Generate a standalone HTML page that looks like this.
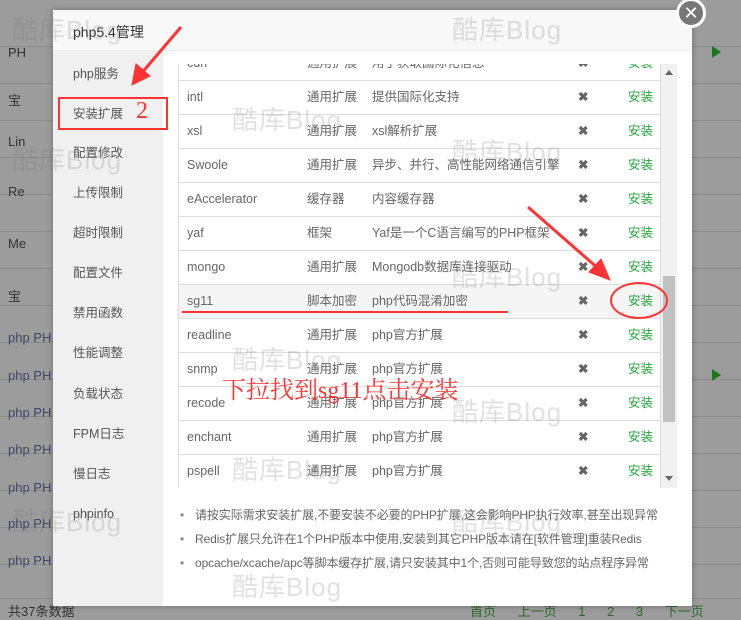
<!DOCTYPE html>
<html><head><meta charset="utf-8"><style>
*{margin:0;padding:0;box-sizing:border-box}
body{width:741px;height:618px;overflow:hidden;background:#9c9c9c;font-family:"Liberation Sans","Noto Sans CJK SC",sans-serif;position:relative;font-size:12px;color:#555}
.bgl{position:absolute;left:0;height:1px;width:741px;background:#8a8a8a}
.bgt{position:absolute;left:8px;font-size:13px;color:#333}
.modal{position:absolute;left:53px;top:10px;width:639px;height:596px;background:#fff;box-shadow:0 0 6px rgba(0,0,0,.3)}
.hd{position:absolute;left:0;top:0;width:639px;height:41px;background:#f8f8f8;border-bottom:1px solid #eee;font-size:14px;color:#333;padding:12px 0 0 20px}
.side{position:absolute;left:0;top:41px;width:110px;height:555px;background:#f0f0f0}
.side div{position:absolute;left:20px;font-size:12.5px;color:#555;line-height:18px}
.tbl{position:absolute;left:125px;top:54px;width:499px;height:424px;overflow:hidden}
.row{position:absolute;left:0;width:483px;height:34px;border:1px solid #ddd;border-top:none;font-size:12.5px;color:#666}
.row span{position:absolute;top:0;line-height:33px;height:33px}
.c1{left:8px}.c2{left:128px}.c3{left:193px}.c4{left:399px;color:#666;font-weight:bold}.c5{left:449px;color:#20a53a}
.sb{position:absolute;left:483px;top:0;width:16px;height:424px;background:#f1f1f1}
.note{position:absolute;left:142px;font-size:12px;color:#666;line-height:18px;letter-spacing:-0.1px}
.note:before{content:"•";position:absolute;left:-15px;color:#888}
.red{color:#f33;font-family:"Liberation Serif","Noto Serif CJK SC",serif}
.wm{position:absolute;font-size:26px;color:rgba(120,120,120,.22);letter-spacing:1px}
</style></head><body>
<div class="bgl" style="top:46px"></div><div class="bgl" style="top:83px"></div><div class="bgl" style="top:120px"></div><div class="bgl" style="top:157px"></div><div class="bgl" style="top:194px"></div><div class="bgl" style="top:231px"></div><div class="bgl" style="top:268px"></div><div class="bgl" style="top:305px"></div><div class="bgl" style="top:342px"></div><div class="bgl" style="top:379px"></div><div class="bgl" style="top:416px"></div><div class="bgl" style="top:453px"></div><div class="bgl" style="top:490px"></div><div class="bgl" style="top:527px"></div><div class="bgl" style="top:564px"></div><div class="bgl" style="top:598px"></div>
<div class="bgt" style="top:45px">PH</div><div class="bgt" style="top:90px">宝</div><div class="bgt" style="top:134px">Lin</div><div class="bgt" style="top:184px">Re</div><div class="bgt" style="top:236px">Me</div><div class="bgt" style="top:286px">宝</div>
<div class="bgt" style="top:330px;color:#446">php PH</div><div class="bgt" style="top:368px;color:#446">php PH</div><div class="bgt" style="top:405px;color:#446">php PH</div><div class="bgt" style="top:442px;color:#446">php PH</div><div class="bgt" style="top:480px;color:#446">php PH</div><div class="bgt" style="top:516px;color:#446">php PH</div><div class="bgt" style="top:553px;color:#446">php PH</div>
<div class="bgt" style="top:601px">共37条数据</div>
<div style="position:absolute;left:470px;top:601px;font-size:13px;color:#2a6a2a;word-spacing:18px">首页 上一页 1 2 3 下一页</div>
<div style="position:absolute;left:712px;top:46px;border-left:9px solid #1a7a1a;border-top:6px solid transparent;border-bottom:6px solid transparent"></div>
<div style="position:absolute;left:712px;top:369px;border-left:9px solid #1a7a1a;border-top:6px solid transparent;border-bottom:6px solid transparent"></div>

<div class="modal">
<div class="hd">php5.4管理</div>
<div class="side">
<div style="top:14px">php服务</div><div style="top:54px">安装扩展</div><div style="top:93px">配置修改</div><div style="top:133px">上传限制</div><div style="top:173px">超时限制</div><div style="top:213px">配置文件</div><div style="top:253px">禁用函数</div><div style="top:293px">性能调整</div><div style="top:334px">负载状态</div><div style="top:374px">FPM日志</div><div style="top:414px">慢日志</div><div style="top:454px">phpinfo</div>
</div>
<div class="tbl">
<div class="row" style="top:-17px"><span class="c1">curl</span><span class="c2">通用扩展</span><span class="c3">用于获取国际化信息</span><span class="c4">✖</span><span class="c5">安装</span></div>
<div class="row" style="top:17px"><span class="c1">intl</span><span class="c2">通用扩展</span><span class="c3">提供国际化支持</span><span class="c4">✖</span><span class="c5">安装</span></div>
<div class="row" style="top:51px"><span class="c1">xsl</span><span class="c2">通用扩展</span><span class="c3">xsl解析扩展</span><span class="c4">✖</span><span class="c5">安装</span></div>
<div class="row" style="top:85px"><span class="c1">Swoole</span><span class="c2">通用扩展</span><span class="c3">异步、并行、高性能网络通信引擎</span><span class="c4">✖</span><span class="c5">安装</span></div>
<div class="row" style="top:119px"><span class="c1">eAccelerator</span><span class="c2">缓存器</span><span class="c3">内容缓存器</span><span class="c4">✖</span><span class="c5">安装</span></div>
<div class="row" style="top:153px"><span class="c1">yaf</span><span class="c2">框架</span><span class="c3">Yaf是一个C语言编写的PHP框架</span><span class="c4">✖</span><span class="c5">安装</span></div>
<div class="row" style="top:187px"><span class="c1">mongo</span><span class="c2">通用扩展</span><span class="c3">Mongodb数据库连接驱动</span><span class="c4">✖</span><span class="c5">安装</span></div>
<div class="row" style="top:221px;background:#f5f5f5"><span class="c1">sg11</span><span class="c2">脚本加密</span><span class="c3">php代码混淆加密</span><span class="c4">✖</span><span class="c5">安装</span></div>
<div class="row" style="top:255px"><span class="c1">readline</span><span class="c2">通用扩展</span><span class="c3">php官方扩展</span><span class="c4">✖</span><span class="c5">安装</span></div>
<div class="row" style="top:289px"><span class="c1">snmp</span><span class="c2">通用扩展</span><span class="c3">php官方扩展</span><span class="c4">✖</span><span class="c5">安装</span></div>
<div class="row" style="top:323px"><span class="c1">recode</span><span class="c2">通用扩展</span><span class="c3">php官方扩展</span><span class="c4">✖</span><span class="c5">安装</span></div>
<div class="row" style="top:357px"><span class="c1">enchant</span><span class="c2">通用扩展</span><span class="c3">php官方扩展</span><span class="c4">✖</span><span class="c5">安装</span></div>
<div class="row" style="top:391px"><span class="c1">pspell</span><span class="c2">通用扩展</span><span class="c3">php官方扩展</span><span class="c4">✖</span><span class="c5">安装</span></div>
<div class="sb"><div style="position:absolute;left:4px;top:6px;border-bottom:5px solid #666;border-left:4px solid transparent;border-right:4px solid transparent"></div><div style="position:absolute;left:2px;top:212px;width:12px;height:146px;background:#c1c1c1"></div><div style="position:absolute;left:4px;top:412px;border-top:5px solid #666;border-left:4px solid transparent;border-right:4px solid transparent"></div></div>
</div>
<div class="note" style="top:496px">请按实际需求安装扩展,不要安装不必要的PHP扩展,这会影响PHP执行效率,甚至出现异常</div>
<div class="note" style="top:520px">Redis扩展只允许在1个PHP版本中使用,安装到其它PHP版本请在[软件管理]重装Redis</div>
<div class="note" style="top:544px">opcache/xcache/apc等脚本缓存扩展,请只安装其中1个,否则可能导致您的站点程序异常</div>
</div>

<div style="position:absolute;left:676px;top:-2px;width:30px;height:30px;border-radius:50%;background:#777;border:3px solid #fff;color:#fff;font-size:18px;line-height:24px;text-align:center">✕</div>

<div class="wm" style="left:12px;top:10px">酷库Blog</div><div class="wm" style="left:232px;top:100px">酷库Blog</div><div class="wm" style="left:452px;top:10px">酷库Blog</div><div class="wm" style="left:12px;top:140px">酷库Blog</div><div class="wm" style="left:452px;top:132px">酷库Blog</div><div class="wm" style="left:452px;top:257px">酷库Blog</div><div class="wm" style="left:232px;top:340px">酷库Blog</div><div class="wm" style="left:452px;top:392px">酷库Blog</div><div class="wm" style="left:232px;top:450px">酷库Blog</div><div class="wm" style="left:12px;top:502px">酷库Blog</div><div class="wm" style="left:452px;top:502px">酷库Blog</div><div class="wm" style="left:232px;top:567px">酷库Blog</div>

<div style="position:absolute;left:58px;top:97px;width:110px;height:33px;border:2px solid #f33"></div>
<div class="red" style="position:absolute;left:136px;top:98px;font-size:24px">2</div>
<div style="position:absolute;left:182px;top:311px;width:326px;height:2px;background:#f33"></div>
<div style="position:absolute;left:610px;top:282px;width:58px;height:37px;border:2px solid #f33;border-radius:50%"></div>
<div class="red" style="position:absolute;left:222px;top:370px;font-size:24px">下拉找到sg11点击安装</div>
<svg style="position:absolute;left:0;top:0" width="741" height="618"><g fill="#f33" stroke="#f33"><line x1="181" y1="27" x2="140" y2="75" stroke-width="3"/><polygon points="132,85 136,64 150,76"/><line x1="528" y1="207" x2="600" y2="270" stroke-width="3"/><polygon points="610,280 589,272 601,259"/></g></svg>
</body></html>
